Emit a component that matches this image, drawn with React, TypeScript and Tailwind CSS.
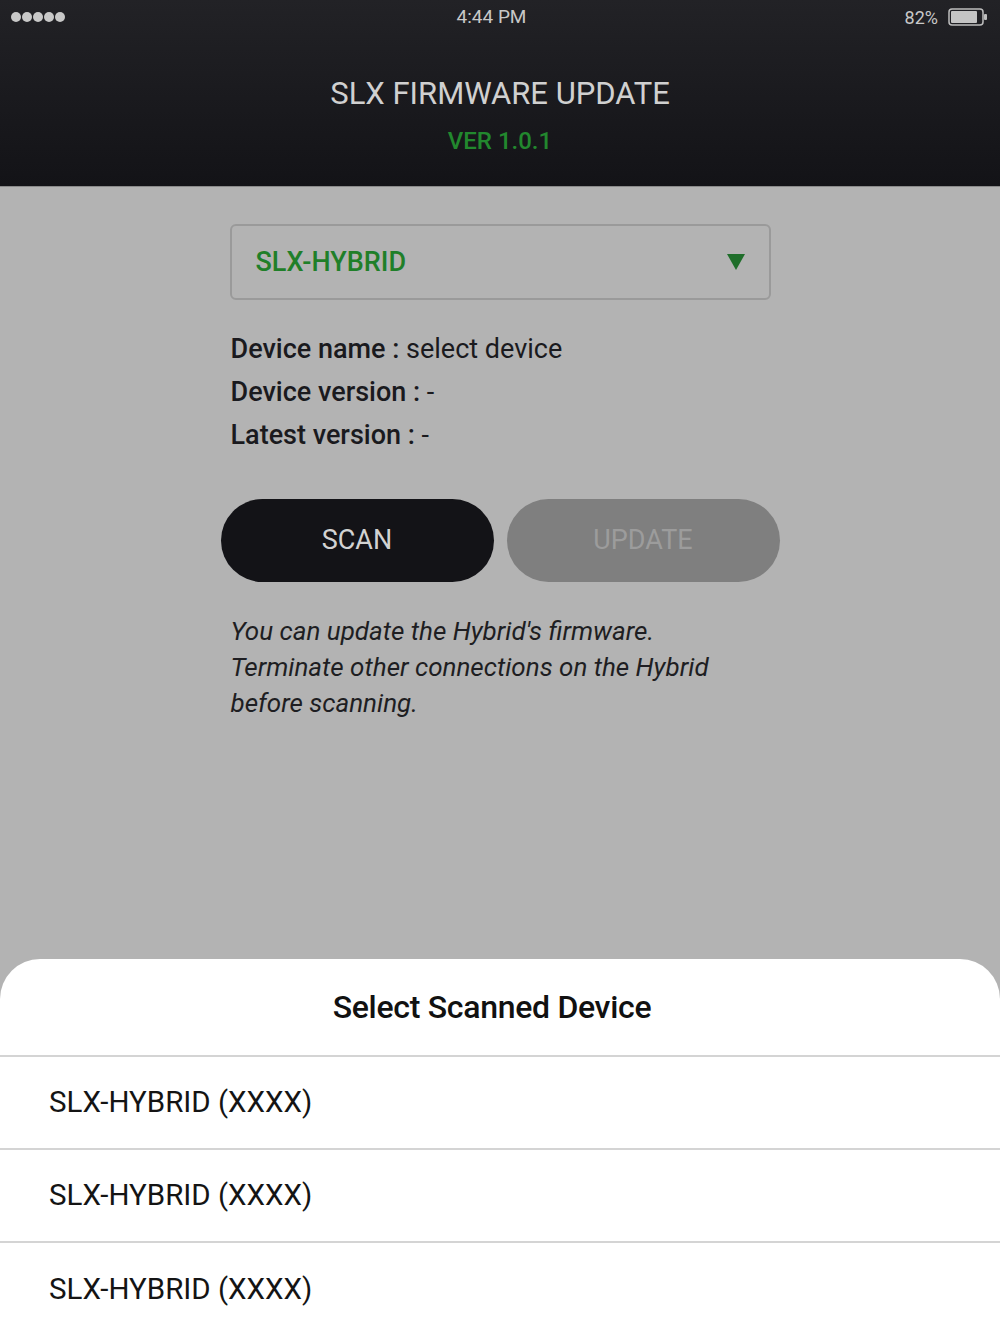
import React from 'react';

const DEVICES = ['SLX-HYBRID (XXXX)', 'SLX-HYBRID (XXXX)', 'SLX-HYBRID (XXXX)'];

const Battery: React.FC = () => (
  <svg width="40" height="18" viewBox="0 0 40 18">
    <rect x="1" y="1" width="34" height="16" rx="3" fill="none" stroke="#bdbdbd" strokeWidth="1.5" />
    <rect x="3" y="3" width="26" height="12" rx="1" fill="#c4c4c4" />
    <rect x="36" y="6" width="3" height="6" rx="1" fill="#bdbdbd" />
  </svg>
);

const StatusBar: React.FC = () => (
  <div className="flex items-center justify-between h-[34px] pl-[11px] pr-[12px] text-[18px] text-[#c8c8c8]">
    <div className="flex gap-[1px] w-[120px]">
      {[0, 1, 2, 3, 4].map((i) => (
        <span key={i} className="w-[10px] h-[10px] rounded-full bg-[#c8c8c8]" />
      ))}
    </div>
    <span className="mr-[16px] text-[19px]">4:44 PM</span>
    <div className="flex items-center gap-[10px] w-[120px] justify-end">
      <span>82%</span>
      <Battery />
    </div>
  </div>
);

const App: React.FC = () => {
  return (
    <div className="h-[1334px] w-full flex flex-col bg-[#b3b3b3] overflow-hidden" style={{ fontFamily: 'Roboto, "Noto Sans", sans-serif' }}>
      <header className="h-[187px] bg-gradient-to-b from-[#222226] to-[#131317] border-b border-[#8a8a8a] shrink-0">
        <StatusBar />
        <h1 className="mt-[42px] text-center text-[31px] leading-[36px] text-[#d0d0d0] font-normal">SLX FIRMWARE UPDATE</h1>
        <p className="mt-[14px] text-center text-[24px] leading-[30px] text-[#22882e] font-medium">VER 1.0.1</p>
      </header>

      <main className="flex-1">
        <div className="w-[559px] mx-auto pt-[37px]">
          <div className="mx-[9px] h-[76px] rounded-[6px] border-2 border-[#9a9a9a] flex items-center justify-between pl-[24px] pr-[24px]">
            <span className="text-[27px] font-medium text-[#1f7f29]">SLX-HYBRID</span>
            <svg width="18" height="16" viewBox="0 0 18 16">
              <path d="M0 0 H18 L9 16 Z" fill="#1f6e2a" />
            </svg>
          </div>

          <div className="px-[10px] mt-[28px] text-[27px] leading-[43px] text-[#1a1a1e]">
            <p><span className="font-medium">Device name :</span> select device</p>
            <p><span className="font-medium">Device version :</span> -</p>
            <p><span className="font-medium">Latest version :</span> -</p>
          </div>

          <div className="mt-[42px] flex gap-[13px]">
            <button className="flex-1 h-[83px] rounded-full bg-[#131317] text-[27px] text-[#d2d2d2]">SCAN</button>
            <button className="flex-1 h-[83px] rounded-full bg-[#7f7f7f] text-[27px] text-[#9c9c9c]">UPDATE</button>
          </div>

          <p className="mt-[31px] px-[10px] text-[26px] leading-[36px] italic text-[#1e1e22]">
            You can update the Hybrid's firmware.
            <br />
            Terminate other connections on the Hybrid
            <br />
            before scanning.
          </p>
        </div>
      </main>

      <section className="h-[375px] shrink-0 bg-white rounded-t-[40px]">
        <div className="h-[98px] flex items-center justify-center pr-[16px] border-b-2 border-[#d4d4d4]">
          <h2 className="text-[32px] font-medium text-[#111] tracking-[-0.3px]">Select Scanned Device</h2>
        </div>
        {DEVICES.map((d, i) => (
          <div key={i} className="h-[93px] flex items-center pl-[49px] border-b-2 border-[#d4d4d4] last:border-b-0">
            <span className="text-[29.5px] text-[#141414]">{d}</span>
          </div>
        ))}
      </section>
    </div>
  );
};

export default App;
